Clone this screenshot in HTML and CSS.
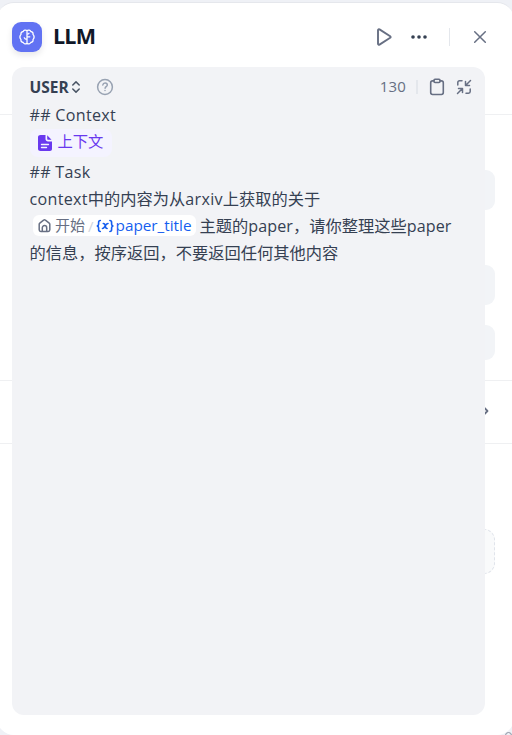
FILE: index.html
```html
<!DOCTYPE html>
<html lang="zh-CN">
<head>
<meta charset="utf-8">
<title>LLM</title>
<link rel="stylesheet" href="styles.css">
</head>
<body>
<main class="panel">
  <header class="header">
    <span class="logo">
      <svg width="16" height="16" viewBox="0 0 16 16" fill="none" stroke="currentColor" stroke-width="1.300" stroke-linecap="round" stroke-linejoin="round"><path d="M8 1.800v12.400M8 1.600C6.600.7 4.900 1.100 4.200 2.500 2.500 2.700 1.700 4 2 5.400.8 6.800.8 9.200 2 10.600c-.3 1.400.5 2.700 2.200 2.900.7 1.400 2.400 1.800 3.800.9 1.400.9 3.100.5 3.800-.9 1.700-.2 2.500-1.500 2.200-2.900 1.200-1.400 1.200-3.800 0-5.200.3-1.400-.5-2.700-2.200-2.900C11.100 1.100 9.400.7 8 1.600M8 5.200c.8 0 1.600-.3 2-1M8 7.800h2.800M8 10.400c-1.300 0-2.300-.6-2.700-1.600"/></svg>
    </span>
    <h1 class="title">LLM</h1>
    <div class="actions">
      <svg class="play" width="18" height="20" viewBox="0 0 18 20" fill="none" stroke="currentColor" stroke-width="1.900" stroke-linejoin="round"><path d="M3 3.200v13.600c0 .9.800 1.200 1.500.8l10.700-6.800c.6-.4.600-1.200 0-1.600L4.500 2.400C3.800 2 3 2.400 3 3.200z"/></svg>
      <svg class="more" width="18" height="6" viewBox="0 0 18 6" fill="currentColor"><circle cx="3" cy="3" r="1.800"/><circle cx="9" cy="3" r="1.800"/><circle cx="15" cy="3" r="1.800"/></svg>
      <span class="rule"></span>
      <svg class="close" width="14" height="14" viewBox="0 0 14 14" fill="none" stroke="currentColor" stroke-width="1.500" stroke-linecap="round"><path d="M1.700 1.700l10.600 10.600M12.300 1.700L1.700 12.300"/></svg>
    </div>
  </header>
  <div class="settings">
    <section class="group fields">
      <div class="field"></div>
      <div class="field second"></div>
      <div class="field short"></div>
    </section>
    <section class="group output">
      <svg width="8" height="12" viewBox="0 0 8 12" fill="none" stroke="currentColor" stroke-width="1.800" stroke-linecap="round" stroke-linejoin="round"><path d="M2.500 3l3 3-3 3"/></svg>
    </section>
    <section class="next"><div class="dropzone"></div></section>
  </div>
  <article class="editor">
    <div class="toolbar">
      <span class="role">USER</span>
      <svg class="sort" width="10" height="14" viewBox="0 0 10 14" fill="none" stroke="currentColor" stroke-width="1.500" stroke-linecap="round" stroke-linejoin="round"><path d="M1.800 5L5 1.900 8.200 5M1.800 9L5 12.100 8.200 9"/></svg>
      <svg class="help" width="18" height="18" viewBox="0 0 18 18" fill="none" stroke="currentColor" stroke-width="1.500" stroke-linecap="round" stroke-linejoin="round"><circle cx="9" cy="9" r="7.400"/><path d="M6.800 7c.2-1.300 1.200-1.900 2.300-1.900 1.300 0 2.200.8 2.200 1.900 0 1.500-2.200 1.700-2.200 3.200M9 12.500v.1"/></svg>
      <span class="count">130</span>
      <span class="rule small"></span>
      <svg class="clip" width="16" height="18" viewBox="0 0 16 18" fill="none" stroke="currentColor" stroke-width="1.600" stroke-linecap="round" stroke-linejoin="round"><path d="M5 2.900H3.600C2.500 2.900 1.700 3.700 1.700 4.800v9.800c0 1.100.8 1.900 1.900 1.900h8.800c1.100 0 1.900-.8 1.900-1.900V4.800c0-1.100-.8-1.900-1.900-1.900H11"/><rect x="5" y="1.200" width="6" height="3.300" rx="1"/></svg>
      <svg class="collapse" width="16" height="16" viewBox="0 0 16 16" fill="none" stroke="currentColor" stroke-width="1.500" stroke-linecap="round" stroke-linejoin="round"><path d="M14.500 1.500L9.800 6.200M9.500 2.500v4h4M1.500 14.500l4.700-4.700M2.500 9.500h4v4M6 1.800H3.500c-1 0-1.700.7-1.700 1.700V6M14.200 10v2.500c0 1-.7 1.700-1.700 1.700H10"/></svg>
    </div>
    <div class="prompt">
      <p class="line latin wide">## Context</p>
      <p class="line chips"><span class="chip context"><svg width="14" height="16" viewBox="0 0 14 16"><path fill="currentColor" d="M2.500 0H7.500v4c0 1.400 1.100 2.500 2.500 2.500h4V14c0 1.100-.9 2-2 2H2.500C1.100 16 0 15.100 0 14V2C0 .9 1.100 0 2.500 0zM9.200.3L13.500 4.800H10.200c-.6 0-1-.4-1-1z"/><path d="M3.500 9.500h7M3.500 12.500h5" stroke="#f4f3ff" stroke-width="1.400" stroke-linecap="round"/></svg><span class="label">上下文</span></span></p>
      <p class="line latin wide">## Task</p>
      <p class="line"><span class="latin wide">context</span>中的内容为从<span class="latin wide">arxiv</span>上获取的关于</p>
      <p class="line variable-line"><span class="chip variable"><svg width="13" height="14" viewBox="0 0 13 14" fill="none" stroke="currentColor" stroke-width="1.500" stroke-linecap="round" stroke-linejoin="round"><path d="M1.200 5.300c0-.5.200-.9.600-1.200l3.800-2.900c.5-.4 1.300-.4 1.800 0l3.800 2.900c.4.300.6.700.6 1.200v5.500c0 .9-.7 1.600-1.600 1.600H2.800c-.9 0-1.600-.7-1.600-1.600zM4.300 12V8.700c0-1.200 1-2.100 2.200-2.100s2.200.9 2.200 2.100V12"/></svg><span class="node">开始</span><span class="slash">/</span><svg class="var" width="18" height="14" viewBox="0 0 18 14" fill="none" stroke="currentColor" stroke-width="1.600" stroke-linecap="round" stroke-linejoin="round"><path d="M4.300 1.500C2.800 1.500 2.600 2.300 2.600 3.500v1.800c0 .8-.4 1.300-1.300 1.700.9.400 1.300.9 1.300 1.700v1.800c0 1.200.2 2 1.700 2M13.900 1.500c1.500 0 1.700.8 1.700 2v1.800c0 .8.400 1.300 1.300 1.700-.9.400-1.300.9-1.300 1.700v1.800c0 1.200-.2 2-1.700 2M7.300 4.500c1.500 0 1.800.8 2 2.500s.5 2.500 1.800 2.500M12 4.500c-1.500 0-2.100 1.500-2.800 2.500S7.700 9.500 6.500 9.500"/></svg><span class="name">paper_title</span></span><span>主题的<span class="latin paper">paper</span>，请你整理这些<span class="latin paper">paper</span></span></p>
      <p class="line">的信息，按序返回，不要返回任何其他内容</p>
    </div>
  </article>
</main>
<span class="resize"></span>
</body>
</html>
```
FILE: styles.css
```css
* { box-sizing: border-box; }
body {
  margin: 0;
  padding-top: 2px;
  width: 512px;
  height: 735px;
  overflow: hidden;
  position: relative;
  background: #eff1f6;
  font-family: "Open Sans", "Noto Sans CJK SC", sans-serif;
}
svg { display: block; flex: none; }
p, h1 { margin: 0; }
.panel {
  position: relative;
  height: 733px;
  margin: 0 -2px 0 -3px;
  padding: 0 2px 0 3px;
  background: #fff;
  border-radius: 17px;
  border-top: 1px solid #e5e7ec;
}
.header {
  display: flex;
  align-items: center;
  height: 68px;
  padding: 0 24px 0 12px;
}
.logo {
  display: flex;
  align-items: center;
  justify-content: center;
  width: 30px;
  height: 30px;
  border-radius: 9px;
  background: #6172f3;
  color: #fff;
  box-shadow: 0 3px 6px rgba(16, 24, 40, .1);
}
.title {
  margin-left: 11px;
  padding-bottom: 2px;
  font-size: 21.5px;
  line-height: 30px;
  font-weight: 700;
  letter-spacing: -.8px;
  color: #101828;
}
.actions { display: flex; align-items: center; margin-left: auto; color: #676f83; }
.play { margin-right: -1px; }
.more { margin-left: 18px; color: #354052; }
.rule { width: 1px; height: 18px; background: #e4e7ec; margin: 0 23px 0 21px; }
.close { margin-right: 1px; }
.settings { height: 660px; padding-top: 43px; }
.group { border: solid #eff0f2; border-width: 1px 0 0; }
.fields { height: 266px; padding: 55px 17px 0 12px; }
.field { height: 40px; border-radius: 9px; background: #f2f4f7; }
.field.second { margin-top: 55px; }
.field.short { height: 35px; margin-top: 20px; }
.output { display: flex; justify-content: flex-end; height: 63px; padding: 24px 22px 0 0; color: #676f83; }
.next { height: 280px; padding: 85px 17px 0 12px; border-top: 1px solid #eff0f2; }
.dropzone { height: 45px; border: 1px dashed #e0e4eb; border-radius: 11px; background: #f9fafb; }
.editor {
  position: absolute;
  top: 64px;
  left: 15px;
  width: 473px;
  height: 648px;
  border-radius: 12px;
  background: #f2f3f6;
}
.toolbar { display: flex; align-items: center; height: 34px; padding: 5px 14px 0 17.5px; color: #676f83; }
.role { width: 41px; font-size: 15.5px; line-height: 20px; font-weight: 700; color: #354052; }
.sort { margin-left: .5px; color: #495464; }
.help { margin-left: 15px; color: #98a2b2; }
.count { margin-left: auto; padding-bottom: 1px; font-size: 15px; line-height: 20px; letter-spacing: .2px; }
.rule.small { width: 2px; height: 14px; margin: 0 11px 0 9.5px; }
.collapse { margin-left: 11px; margin-right: -.5px; }
.prompt { padding: 1px 17px 0 17.5px; color: #354052; font-size: 16.25px; }
.line { display: flex; align-items: center; height: 27px; line-height: 27px; white-space: nowrap; }
.latin { font-size: 16.1px; }
.wide { letter-spacing: .3px; }
.paper { letter-spacing: .1px; }
.chips { height: 30px; padding-bottom: 2px; }
.chip { display: flex; align-items: center; }
.context { width: 82px; height: 28px; padding: 0 0 1px 8px; gap: 6px; border-radius: 8px; background: #f4f3ff; color: #6938ef; font-size: 15.3px; }
.context .label { padding-bottom: 2px; }
.variable { width: 163px; height: 21px; margin: 0 3.5px 2px 3.5px; padding-left: 4.5px; border-radius: 6px; background: #fff; color: #676f83; font-size: 15px; line-height: 20px; }
.node { margin-left: 4.5px; padding-bottom: 2px; }
.slash { margin: 0 2.5px 0 3px; color: #d0d5dd; }
.var { color: #155eef; }
.name { margin-left: 1.5px; padding-bottom: 2px; color: #155eef; font-size: 15.3px; }
.resize { position: absolute; left: 505px; top: 732px; width: 7px; height: 7px; border: 1px solid #8991a0; border-radius: 50%; }
```
